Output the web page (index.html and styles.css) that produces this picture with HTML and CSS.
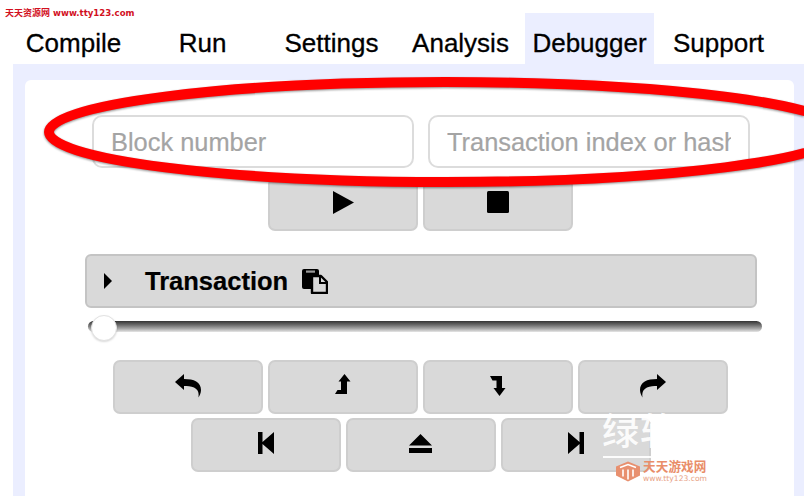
FILE: index.html
```html
<!DOCTYPE html>
<html lang="en">
<head>
<meta charset="utf-8">
<title>Debugger</title>
<link rel="stylesheet" href="styles.css">
</head>
<body>
<div class="page">
  <nav class="tabs">
    <div class="tab">Compile</div>
    <div class="tab">Run</div>
    <div class="tab">Settings</div>
    <div class="tab">Analysis</div>
    <div class="tab tab-active">Debugger</div>
    <div class="tab">Support</div>
  </nav>
  <main class="panel">
    <section class="card">
      <div class="stack">
        <div class="inputs">
          <input class="field" placeholder="Block number">
          <input class="field" placeholder="Transaction index or hash">
        </div>
        <div class="btn-row row-start">
          <button class="btn"><svg class="ico" viewBox="0 0 28 28"><path d="M4 1 25 12.500 4 24Z"/></svg></button>
          <button class="btn"><svg class="ico" viewBox="0 0 28 28"><rect x="3" y="1" width="22" height="22" rx="1.500"/></svg></button>
        </div>
        <div class="bar">
          <svg class="caret" viewBox="0 0 8 16"><path d="M0 0 8 8 0 16Z"/></svg>
          <span class="bar-title">Transaction</span>
          <svg class="clip" viewBox="0 0 26 26">
            <path d="M2 1H15Q17 1 17 3V21H2Q0 21 0 19V3Q0 1 2 1Z"/>
            <rect x="4" y="2.500" width="9" height="2.200" fill="#9a9a9a"/>
            <path d="M10 8H19L25 14V25H10Z" fill="#d8d8d8" stroke="#000" stroke-width="2.400" stroke-linejoin="round"/>
            <path d="M18 8V15H25" fill="none" stroke="#000" stroke-width="2"/>
          </svg>
        </div>
        <div class="slider"><span class="thumb"></span></div>
        <div class="btn-row row-steps">
          <button class="btn"><svg class="ico" viewBox="0 0 28 28"><path d="M1 9 10 1V6C20 6 27 9 27 17C27 20 25.500 22.500 24.500 24.500C25 20 24.500 17 20 14.500C17 13 13 13 10 13V17Z"/></svg></button>
          <button class="btn"><svg class="ico" viewBox="0 0 28 28"><path d="M15.500 1 21.500 8.500H18V21H6L8.500 17H12V8.500H9.500Z"/></svg></button>
          <button class="btn"><svg class="ico" viewBox="0 0 28 28"><path d="M6 3H18V15H21.500L15.500 23 9.500 15H12.500V7.500H8.500Z"/></svg></button>
          <button class="btn"><svg class="ico" viewBox="0 0 28 28"><path d="M27 9 18 1V6C8 6 1 9 1 17C1 20 2.500 22.500 3.500 24.500C3 20 3.500 17 8 14.500C11 13 15 13 18 13V17Z"/></svg></button>
        </div>
        <div class="btn-row row-jump">
          <button class="btn"><svg class="ico" viewBox="0 0 28 28"><path d="M6 1H10.500V11L22 1V23L10.500 13V23H6Z"/></svg></button>
          <button class="btn"><svg class="ico" viewBox="0 0 28 28"><path d="M13.500 3 25 14.500H2ZM2 17H25V22H2Z"/></svg></button>
          <button class="btn"><svg class="ico" viewBox="0 0 28 28"><path d="M22 1H17.500V11L6 1V23L17.500 13V23H22Z"/></svg></button>
        </div>
      </div>
    </section>
  </main>
</div>

<svg class="ring" viewBox="0 0 804 496">
  <ellipse cx="445" cy="132" rx="396" ry="50" fill="none" stroke="#ff0000" stroke-width="10"/>
</svg>

<div class="mark-top"><span class="mark-top-cjk">天天资源网</span> www.tty123.com</div>

<div class="mark-big">绿软</div>
<div class="mark-line"></div>
<div class="mark-logo">
  <svg class="mark-house" viewBox="0 0 24 20">
    <path d="M12 0 24 5V14L12 20 0 14V5Z" fill="#e8906f"/>
    <path d="M4 6 12 3 20 6M7 8V15M12 8V18M17 8V15" fill="none" stroke="#fff" stroke-width="1.600"/>
  </svg>
  <div class="mark-words">
    <div class="mark-cn">天天游戏网</div>
    <div class="mark-url">www.tty123.com</div>
  </div>
</div>
</body>
</html>
```

FILE: styles.css
```css
* { box-sizing: border-box; }

html, body {
  margin: 0;
  height: 496px;
  overflow: hidden;
  background: #fff;
}

body {
  position: relative;
  width: 804px;
  font-family: "Liberation Sans", Arial, sans-serif;
  color: #000;
}

.page {
  display: flex;
  flex-direction: column;
  height: 496px;
  padding-top: 13px;
}

.tabs {
  display: grid;
  grid-template-columns: repeat(6, 129px);
  margin-left: 9px;
}

.tab {
  padding: 15px 0 6px;
  font-size: 26px;
  line-height: 30px;
  text-align: center;
  color: #000;
  -webkit-text-stroke: .3px #000;
}

.tab-active { background: #ebeeff; }

.panel {
  flex: 1;
  margin-left: 13px;
  padding: 16px 10px 0 12px;
  background: #ebeeff;
}

.card {
  height: 100%;
  padding: 35px 0 0 60px;
  background: #fff;
  border-radius: 6px 6px 0 0;
}

.stack { width: 672px; }

.inputs {
  display: flex;
  justify-content: center;
  gap: 14px;
}

.field {
  width: 322px;
  height: 53px;
  padding: 2px 17px 0;
  border: 2px solid #dcdcdc;
  border-radius: 10px;
  background: #fff;
  font-family: "Liberation Sans", Arial, sans-serif;
  font-size: 25.400px;
  outline: none;
}

.field::placeholder {
  color: #a4a4a4;
  opacity: 1;
  -webkit-text-stroke: .2px #a4a4a4;
}

.btn-row {
  display: flex;
  justify-content: center;
  gap: 5px;
  margin-right: 1px;
}

.row-start { margin-top: 9px; }
.row-steps { margin-top: 28px; }
.row-jump { margin-top: 4px; }

.btn {
  display: flex;
  align-items: center;
  justify-content: center;
  width: 150px;
  height: 54px;
  padding: 0;
  border: 2px solid #cecece;
  border-radius: 7px;
  background: #d9d9d9;
}

.ico {
  display: block;
  width: 28px;
  height: 28px;
  fill: #000;
}

.bar {
  display: flex;
  align-items: center;
  height: 54px;
  margin-top: 23px;
  padding-left: 17px;
  border: 2px solid #c4c4c4;
  border-radius: 6px;
  background: #d9d9d9;
}

.caret {
  width: 8px;
  height: 16px;
  flex: none;
  fill: #000;
}

.bar-title {
  margin-left: 33px;
  font-size: 25.500px;
  font-weight: 700;
  -webkit-text-stroke: .2px #000;
}

.clip {
  width: 26px;
  height: 26px;
  margin-left: 14px;
  flex: none;
  fill: #000;
}

.slider {
  position: relative;
  width: 674px;
  height: 11px;
  margin: 13px 0 0 3px;
  border-radius: 6px;
  background: linear-gradient(#333 0%, #6a6a6a 35%, #a8a8a8 70%, #e6e6e6 100%);
}

.thumb {
  position: absolute;
  left: 3px;
  top: -6px;
  width: 26px;
  height: 26px;
  border: 1px solid #e2e2e2;
  border-radius: 50%;
  background: #fff;
  box-shadow: 0 1px 2px rgba(0, 0, 0, .15);
}

.ring {
  position: absolute;
  left: 0;
  top: 0;
  width: 804px;
  height: 496px;
  filter: drop-shadow(0 1px 1px rgba(0, 0, 0, .45));
}

.mark-top {
  position: absolute;
  left: 5px;
  top: 7px;
  font-family: "DejaVu Sans", sans-serif;
  font-size: 8.600px;
  line-height: 12px;
  font-weight: 700;
  color: #d2101e;
  white-space: nowrap;
}

.mark-top-cjk {
  font-family: "Noto Sans CJK SC", sans-serif;
  font-size: 9px;
}

.mark-big {
  position: absolute;
  left: 602px;
  top: 405px;
  font-family: "Noto Sans CJK SC", sans-serif;
  font-size: 37px;
  line-height: 48px;
  letter-spacing: 1px;
  font-weight: 500;
  color: rgba(255, 255, 255, .92);
  white-space: nowrap;
}

.mark-line {
  position: absolute;
  left: 603px;
  top: 456px;
  width: 48px;
  height: 2px;
  background: rgba(255, 255, 255, .9);
}

.mark-logo {
  position: absolute;
  left: 616px;
  top: 461px;
  display: flex;
  gap: 3px;
}

.mark-house {
  display: block;
  width: 24px;
  height: 21px;
}

.mark-cn {
  font-family: "Liberation Sans", "Noto Sans CJK SC", sans-serif;
  font-size: 12.600px;
  line-height: 12px;
  letter-spacing: .1px;
  font-weight: 700;
  color: #e98d69;
  white-space: nowrap;
}

.mark-url {
  margin-top: 1.500px;
  font-family: "DejaVu Sans", sans-serif;
  font-size: 7.600px;
  line-height: 8px;
  color: #e8a285;
  white-space: nowrap;
}
```
